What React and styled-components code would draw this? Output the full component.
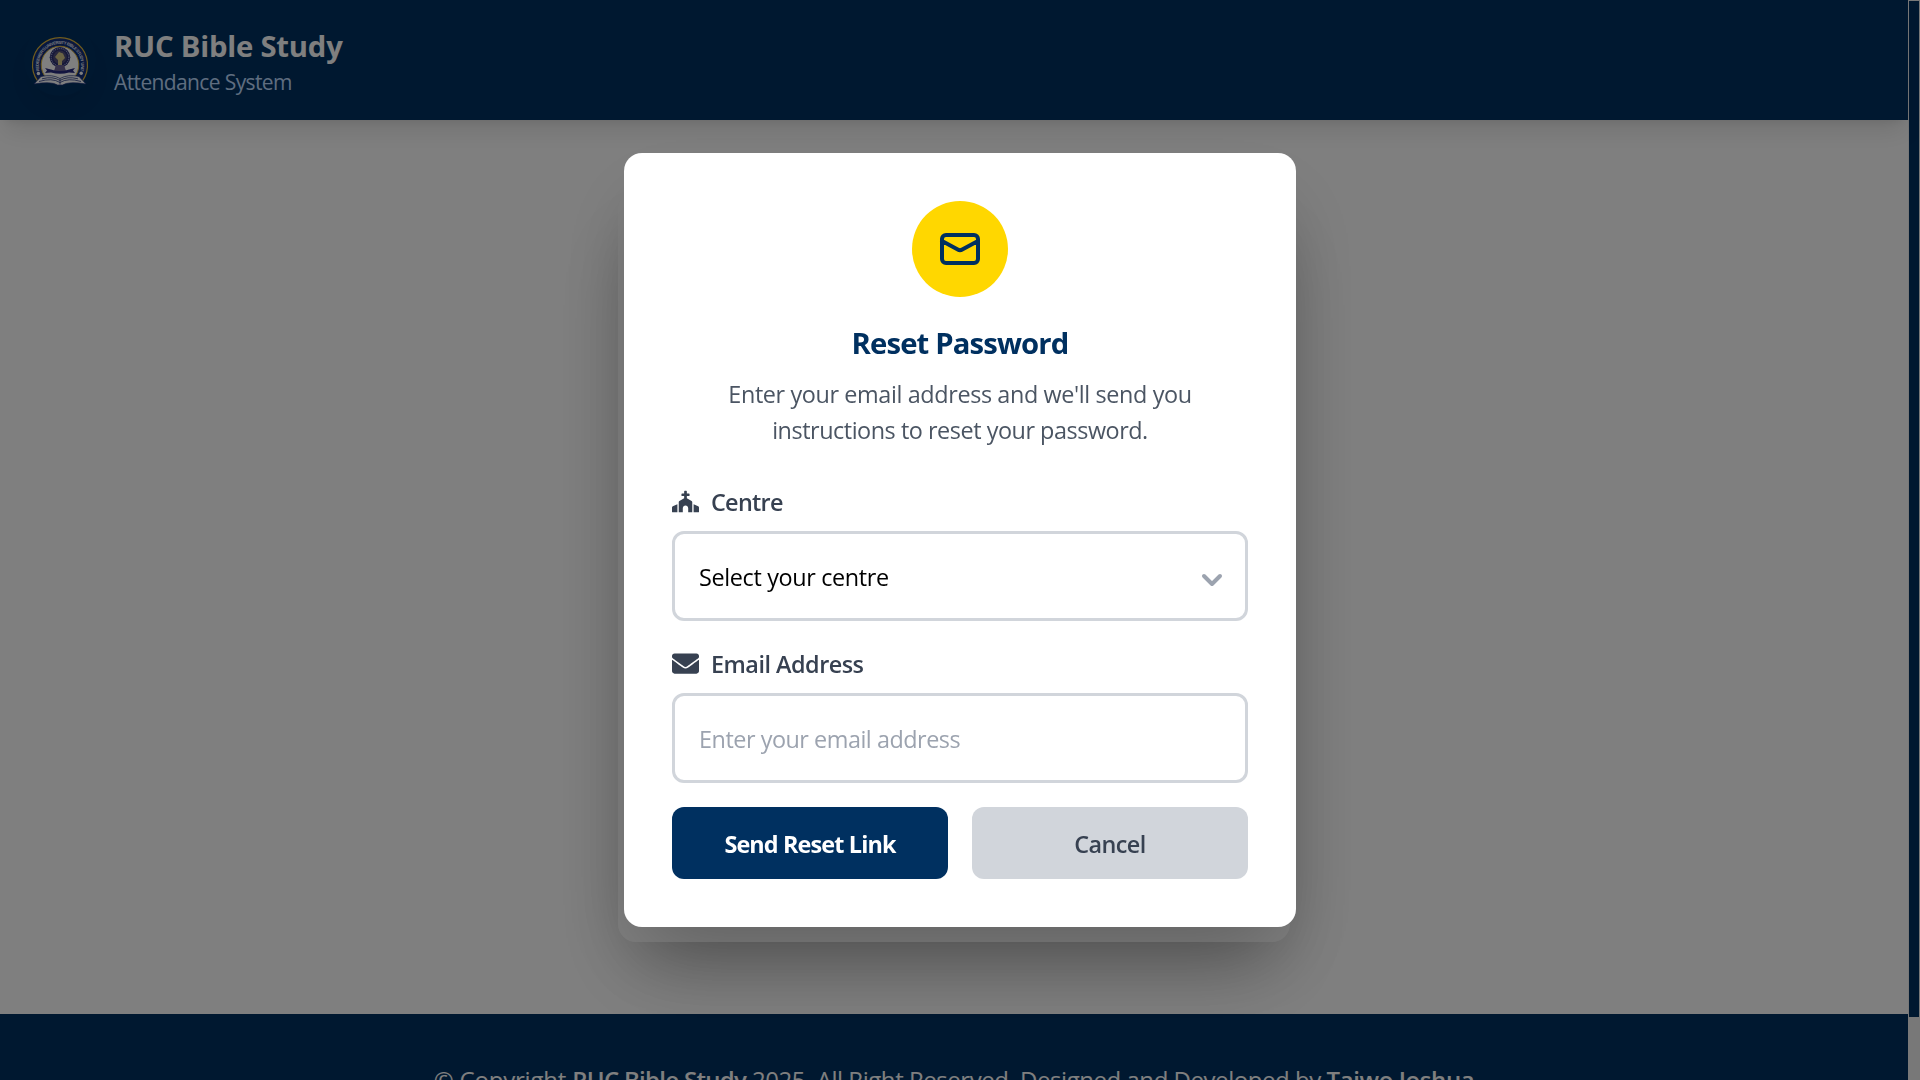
import React from 'react';
import styled, { createGlobalStyle } from 'styled-components';
import { FaChurch, FaEnvelope } from 'react-icons/fa';

const navy = '#003060';
const gold = '#ffd700';
const sans = '"Open Sans", "Noto Sans", sans-serif';

const GlobalStyle = createGlobalStyle`
  * { box-sizing: border-box; }
  body { margin: 0; overflow: hidden; font-family: ${sans}; background: #fff; }
`;

const Window = styled.div`
  display: flex;
  width: 100vw;
  height: 100vh;
  overflow: hidden;
`;

const Page = styled.div`
  display: flex;
  flex-direction: column;
  flex: 1;
  min-width: 0;
`;

const Header = styled.header`
  display: flex;
  align-items: center;
  gap: 18px;
  flex: none;
  height: 120px;
  padding: 0 24px;
  background: ${navy};
  box-shadow: 0 15px 22.5px -4.5px rgba(0, 0, 0, 0.1), 0 6px 9px -6px rgba(0, 0, 0, 0.1);
  z-index: 1;
`;

const Logo = styled.div`
  width: 72px;
  height: 72px;
  border-radius: 50%;
  box-shadow: 0 15px 22.5px -4.5px rgba(0, 0, 0, 0.07);
  svg { display: block; }
`;

const Brand = styled.div`
  padding-top: 3px;
`;

const BrandName = styled.h1`
  margin: 0;
  font-size: 29.25px;
  font-weight: 700;
  line-height: 42px;
  letter-spacing: -0.21px;
  color: #fff;
`;

const BrandSub = styled.p`
  margin: 0;
  font-size: 21px;
  line-height: 31.5px;
  letter-spacing: -0.62px;
  color: #bfdbfe;
`;

const Main = styled.main`
  display: flex;
  align-items: center;
  justify-content: center;
  flex: none;
  height: 894px;
  background: #fff;
`;

const LoginCard = styled.section`
  width: 672px;
  height: 750px;
  border-radius: 18px;
  background: #fff;
  box-shadow: 0 37.5px 75px -18px rgba(0, 0, 0, 0.25);
`;

const Footer = styled.footer`
  flex: none;
  height: 132px;
  padding-top: 49px;
  background: ${navy};
  color: #fff;
  font-size: 24px;
  line-height: 34px;
  text-align: center;
  z-index: 1;
`;

const Phrase = styled.span`
  letter-spacing: ${(p) => p.$track || 0}px;
  font-weight: ${(p) => (p.$strong ? 650 : 400)};
`;

const Scrollbar = styled.div`
  flex: none;
  width: 12px;
  padding: 1px;
  background: #f1f1f1;
`;

const Thumb = styled.div`
  height: 1016px;
  background: ${navy};
`;

const Overlay = styled.div`
  position: fixed;
  inset: 0;
  display: flex;
  align-items: center;
  justify-content: center;
  background: rgba(0, 0, 0, 0.5);
  z-index: 10;
`;

const Modal = styled.div`
  width: 672px;
  padding: 48px;
  border-radius: 18px;
  background: #fff;
  box-shadow: 0 37.5px 75px -18px rgba(0, 0, 0, 0.25);
`;

const Intro = styled.div`
  display: flex;
  flex-direction: column;
  align-items: center;
  margin-bottom: 36px;
`;

const Badge = styled.div`
  display: grid;
  place-items: center;
  width: 96px;
  height: 96px;
  margin-bottom: 24px;
  border-radius: 50%;
  background: ${gold};
`;

const Title = styled.h2`
  margin: 0 0 12px;
  padding-top: 2px;
  font-size: 29.25px;
  font-weight: 700;
  line-height: 40px;
  letter-spacing: -0.85px;
  color: ${navy};
`;

const Hint = styled.p`
  margin: 0;
  text-align: center;
  color: #4b5563;
`;

const HintLine = styled.span`
  display: block;
  padding-top: 2px;
  font-size: 23.4px;
  line-height: 34px;
  letter-spacing: ${(p) => p.$track}px;
`;

const Form = styled.form`
  display: flex;
  flex-direction: column;
  gap: 24px;
  margin: 0;
`;

const Field = styled.div`
  display: flex;
  flex-direction: column;
  gap: 12px;
`;

const Label = styled.label`
  display: flex;
  align-items: center;
  gap: 12px;
  height: 36px;
  color: #374151;
  svg { width: 27px; height: 27px; flex: none; }
`;

const LabelText = styled.span`
  padding-top: 2px;
  font-size: 23.4px;
  font-weight: 600;
  line-height: 34px;
  letter-spacing: ${(p) => p.$track}px;
`;

const Control = styled.div`
  display: flex;
  align-items: center;
  justify-content: space-between;
  height: 90px;
  padding: 0 22px 0 24px;
  border: 3px solid #d1d5db;
  border-radius: 12px;
  background: #fff;
`;

const controlText = `
  flex: 1;
  min-width: 0;
  height: 40px;
  margin: 0;
  padding: 2px 0 0;
  border: 0;
  outline: 0;
  background: transparent;
  font-family: ${sans};
  font-size: 23.4px;
  color: #000;
`;

const Select = styled.select`
  ${controlText}
  appearance: none;
  letter-spacing: -0.35px;
`;

const Input = styled.input`
  ${controlText}
  letter-spacing: -0.47px;
  &::placeholder { color: #9ca3af; opacity: 1; }
`;

const ChevronIcon = styled.svg`
  flex: none;
  margin-top: 8px;
`;

const Actions = styled.div`
  display: grid;
  grid-template-columns: 1fr 1fr;
  gap: 24px;
`;

const Button = styled.button`
  height: 72px;
  padding: 2px 0 0;
  border: 0;
  border-radius: 12px;
  font-family: ${sans};
  font-size: 23.4px;
  font-weight: ${(p) => (p.$primary ? 660 : 600)};
  letter-spacing: ${(p) => p.$track}px;
  background: ${(p) => (p.$primary ? navy : '#d1d5db')};
  color: ${(p) => (p.$primary ? '#fff' : '#374151')};
`;

const Crest = () => (
  <svg width="72" height="72" viewBox="0 0 72 72">
    <path d="M13.6 57 A27.5 27.5 0 1 1 58.4 57 Z" fill="#12307c" stroke="#e0b83c" strokeWidth="1.2" />
    <path d="M26.1 57 A18.8 18.8 0 1 1 45.9 57 Z" fill="#fff" stroke="#e0b83c" strokeWidth="1" />
    <path id="crest-arc" d="M15.8 47.5 A21.2 21.2 0 1 1 56.2 47.5" fill="none" />
    <text fontFamily="Liberation Sans, sans-serif" fontWeight="700" fontSize="4.2" fill="#e8ecf8">
      <textPath href="#crest-arc" startOffset="50%" textAnchor="middle" textLength="78">
        REDEEMER'S UNIVERSITY BIBLE STUDY UNIT
      </textPath>
    </text>
    <circle cx="14.4" cy="49.5" r="1.7" fill="#fff" />
    <circle cx="57.2" cy="49.2" r="1.7" fill="#fff" />
    <circle cx="36" cy="33.3" r="10.3" fill="#2b2f72" />
    <circle cx="36" cy="33.3" r="8.8" fill="none" stroke="#9aa0cc" strokeWidth="1.2" strokeDasharray="1 1" />
    <circle cx="36" cy="33.3" r="6.8" fill="#514f7a" />
    <path d="M35 28 L39 29.5 L41 34 L38 37 L38 42 L34 42 L34 36 L31 33 Z" fill="#d6c98a" />
    <path d="M32 41 L40 41 L42 47 L30 47 Z" fill="#6d6494" />
    <path d="M21 44 L27 45.5 Q36 48.5 45 45.5 L51 44 L49 46.5 L51 49 L45 48.5 Q36 51 27 48.5 L21 49 L23 46.5 Z" fill="#262a80" />
    <path d="M10 60 L17 52.5 Q28 50 36 54.5 Q44 50 55 52.5 L62 60 Q45 57 38.5 61 L33.5 61 Q27 57 10 60 Z" fill="#fff" stroke="#23357f" strokeWidth="0.7" />
    <path d="M15 57.5 Q28 53.5 36 58.5 Q44 53.5 57 57.5 M18 54.8 Q29 52 36 56.5 Q43 52 54 54.8 M36 54.5 V60.5" fill="none" stroke="#23357f" strokeWidth="0.8" />
  </svg>
);

const MailOutline = () => (
  <svg width="48" height="48" viewBox="0 0 24 24" fill="none" stroke={navy} strokeWidth="2" strokeLinecap="round" strokeLinejoin="round">
    <path d="M3 8l7.89 4.26a2 2 0 002.22 0L21 8M5 19h14a2 2 0 002-2V7a2 2 0 00-2-2H5a2 2 0 00-2 2v10a2 2 0 002 2z" />
  </svg>
);

const Chevron = () => (
  <ChevronIcon width="22" height="16" viewBox="0 0 22 16" fill="none" stroke="#9ca3af" strokeWidth="4" strokeLinecap="round" strokeLinejoin="round">
    <path d="M3 4l8 8 8-8" />
  </ChevronIcon>
);

export default function App() {
  return (
    <>
      <GlobalStyle />
      <Window>
        <Page>
          <Header>
            <Logo><Crest /></Logo>
            <Brand>
              <BrandName>RUC Bible Study</BrandName>
              <BrandSub>Attendance System</BrandSub>
            </Brand>
          </Header>
          <Main><LoginCard /></Main>
          <Footer>
            <Phrase $track={-0.2}>© Copyright </Phrase>
            <Phrase $strong $track={-0.7}>RUC Bible Study</Phrase>
            <Phrase $track={-0.46}> 2025. All Right Reserved. Designed and Developed by </Phrase>
            <Phrase $strong $track={-0.4}>Taiwo Joshua</Phrase>
          </Footer>
        </Page>
        <Scrollbar><Thumb /></Scrollbar>
      </Window>
      <Overlay>
        <Modal>
          <Intro>
            <Badge><MailOutline /></Badge>
            <Title>Reset Password</Title>
            <Hint>
              <HintLine $track={-0.38}>Enter your email address and we'll send you</HintLine>
              <HintLine $track={-0.46}>instructions to reset your password.</HintLine>
            </Hint>
          </Intro>
          <Form>
            <Field>
              <Label><FaChurch /><LabelText $track={-0.7}>Centre</LabelText></Label>
              <Control>
                <Select defaultValue=""><option value="">Select your centre</option></Select>
                <Chevron />
              </Control>
            </Field>
            <Field>
              <Label><FaEnvelope /><LabelText $track={-0.5}>Email Address</LabelText></Label>
              <Control><Input type="email" placeholder="Enter your email address" /></Control>
            </Field>
            <Actions>
              <Button type="button" $primary $track={-0.86}>Send Reset Link</Button>
              <Button type="button" $track={-0.55}>Cancel</Button>
            </Actions>
          </Form>
        </Modal>
      </Overlay>
    </>
  );
}
